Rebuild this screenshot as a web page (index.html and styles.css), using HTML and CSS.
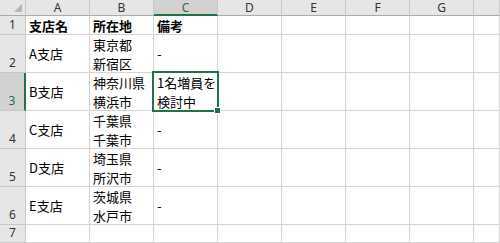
FILE: index.html
```html
<!DOCTYPE html>
<html lang="ja">
    <head>
        <meta charset="utf-8">
        <title>支店一覧</title>
        <link rel="stylesheet" href="styles.css">
    </head>
    <body>
        <div class="sheet">
            <!-- header row -->
            <div class="corner">
                <svg width="9" height="9" viewBox="0 0 9 9"><polygon points="8,0 8,8 0,8" fill="#b4b4b4"/></svg>
            </div>
            <div class="colHead">A</div>
            <div class="colHead">B</div>
            <div class="colHead active">C</div>
            <div class="colHead">D</div>
            <div class="colHead">E</div>
            <div class="colHead">F</div>
            <div class="colHead">G</div>
            <div class="colHead"></div>

            <!-- row 1 -->
            <div class="rowHead">1</div>
            <div class="cell bold">支店名</div>
            <div class="cell bold">所在地</div>
            <div class="cell bold">備考</div>
            <div class="cell"></div><div class="cell"></div><div class="cell"></div><div class="cell"></div><div class="cell"></div>

            <!-- row 2 -->
            <div class="rowHead">2</div>
            <div class="cell">A支店</div>
            <div class="cell">東京都<br>新宿区</div>
            <div class="cell">-</div>
            <div class="cell"></div><div class="cell"></div><div class="cell"></div><div class="cell"></div><div class="cell"></div>

            <!-- row 3 -->
            <div class="rowHead active">3</div>
            <div class="cell">B支店</div>
            <div class="cell">神奈川県<br>横浜市</div>
            <div class="cell selected">1名増員を<br>検討中
                <div class="selBox"><div class="handle"></div></div>
            </div>
            <div class="cell"></div><div class="cell"></div><div class="cell"></div><div class="cell"></div><div class="cell"></div>

            <!-- row 4 -->
            <div class="rowHead">4</div>
            <div class="cell">C支店</div>
            <div class="cell">千葉県<br>千葉市</div>
            <div class="cell">-</div>
            <div class="cell"></div><div class="cell"></div><div class="cell"></div><div class="cell"></div><div class="cell"></div>

            <!-- row 5 -->
            <div class="rowHead">5</div>
            <div class="cell">D支店</div>
            <div class="cell">埼玉県<br>所沢市</div>
            <div class="cell">-</div>
            <div class="cell"></div><div class="cell"></div><div class="cell"></div><div class="cell"></div><div class="cell"></div>

            <!-- row 6 -->
            <div class="rowHead">6</div>
            <div class="cell">E支店</div>
            <div class="cell">茨城県<br>水戸市</div>
            <div class="cell">-</div>
            <div class="cell"></div><div class="cell"></div><div class="cell"></div><div class="cell"></div><div class="cell"></div>

            <!-- row 7 -->
            <div class="rowHead">7</div>
            <div class="cell"></div><div class="cell"></div><div class="cell"></div>
            <div class="cell"></div><div class="cell"></div><div class="cell"></div><div class="cell"></div><div class="cell"></div>
        </div>
    </body>
</html>
```

FILE: styles.css
```css
* {
    margin: 0;
    padding: 0;
    box-sizing: border-box;
}
html, body {
    width: 500px;
    height: 243px;
    overflow: hidden;
    background: #ffffff;
}
.sheet {
    display: grid;
    grid-template-columns: 26px repeat(7, 64px) 1fr;
    grid-template-rows: 16px 19px repeat(5, 38px) 1fr;
    width: 500px;
    height: 243px;
    font-family: "Noto Sans CJK JP", "Noto Sans", sans-serif;
    font-size: 13px;
    color: #000;
}
.corner {
    background: #e6e6e6;
    border-right: 1px solid #c8c8c8;
    border-bottom: 1px solid #ababab;
    display: flex;
    justify-content: flex-end;
    align-items: flex-end;
    padding: 0 2px 2px 0;
}
.corner svg {
    display: block;
}
.colHead {
    background: #e6e6e6;
    border-right: 1px solid #c8c8c8;
    border-bottom: 1px solid #ababab;
    font-family: "Noto Sans", sans-serif;
    font-size: 12px;
    line-height: 15px;
    color: #333;
    text-align: center;
}
.colHead.active {
    background: #d2d2d2;
    color: #217346;
    border-bottom: 2px solid #217346;
}
.rowHead {
    background: #e6e6e6;
    border-right: 1px solid #c8c8c8;
    border-bottom: 1px solid #c8c8c8;
    font-family: "Noto Sans", sans-serif;
    font-size: 12px;
    line-height: 16px;
    color: #333;
    display: flex;
    justify-content: center;
    align-items: flex-end;
    padding-bottom: 1px;
}
.rowHead.active {
    background: #d2d2d2;
    color: #217346;
    border-right: 2px solid #217346;
}
.cell {
    border-right: 1px solid #d4d4d4;
    border-bottom: 1px solid #d4d4d4;
    display: flex;
    align-items: center;
    padding-left: 3px;
    line-height: 19px;
    white-space: nowrap;
}
.bold {
    font-weight: bold;
}
.selected {
    position: relative;
}
.selBox {
    position: absolute;
    top: -2px;
    left: -2px;
    right: -2px;
    bottom: -2px;
    border: 2px solid #217346;
}
.handle {
    position: absolute;
    right: -4px;
    bottom: -4px;
    width: 7px;
    height: 7px;
    background: #217346;
    border: 1px solid #ffffff;
}
```
